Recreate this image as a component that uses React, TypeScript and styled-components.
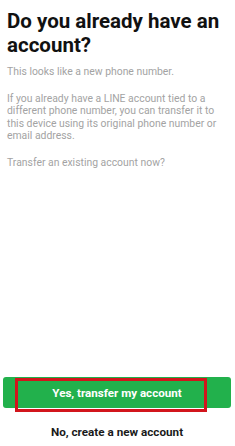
import styled, { createGlobalStyle } from 'styled-components';

const GlobalStyle = createGlobalStyle`
  html, body {
    margin: 0;
    padding: 0;
    background: #ffffff;
  }
  body {
    font-family: Roboto, "Noto Sans", "Liberation Sans", sans-serif;
  }
`;

const Screen = styled.div`
  box-sizing: border-box;
  display: flex;
  flex-direction: column;
  height: 446px;
  width: 235px;
  padding: 9px 0 0;
`;

const Content = styled.div`
  flex: 1;
  padding: 0 7px;
`;

const Title = styled.h1`
  color: #111111;
  font-size: 20.5px;
  font-weight: 700;
  line-height: 24px;
  margin: 0 0 9px;
`;

const Paragraph = styled.p`
  color: #a3a3a3;
  font-size: 10.4px;
  line-height: 12.6px;
  margin: 0 0 14px;
`;

const Footer = styled.div`
  display: flex;
  flex-direction: column;
  align-items: center;
  padding: 0 4px 7px 3px;
`;

const PrimaryButton = styled.button`
  position: relative;
  background: #22b14c;
  border: none;
  border-radius: 3px;
  color: #ffffff;
  font-family: inherit;
  font-size: 11.6px;
  font-weight: 700;
  height: 31px;
  width: 100%;
`;

const Highlight = styled.span`
  position: absolute;
  left: 12px;
  right: 24px;
  top: 1px;
  bottom: -4px;
  border: 3px solid #d2151c;
`;

const SecondaryButton = styled.button`
  background: none;
  border: none;
  color: #1a1a1a;
  font-family: inherit;
  font-size: 11.7px;
  font-weight: 700;
  margin-top: 17px;
  padding: 0;
`;

export default function App() {
  return (
    <Screen>
      <GlobalStyle />
      <Content>
        <Title>Do you already have an account?</Title>
        <Paragraph>This looks like a new phone number.</Paragraph>
        <Paragraph>
          If you already have a LINE account tied to a different phone number, you can transfer it to
          this device using its original phone number or email address.
        </Paragraph>
        <Paragraph>Transfer an existing account now?</Paragraph>
      </Content>
      <Footer>
        <PrimaryButton>
          <Highlight />
          Yes, transfer my account
        </PrimaryButton>
        <SecondaryButton>No, create a new account</SecondaryButton>
      </Footer>
    </Screen>
  );
}
